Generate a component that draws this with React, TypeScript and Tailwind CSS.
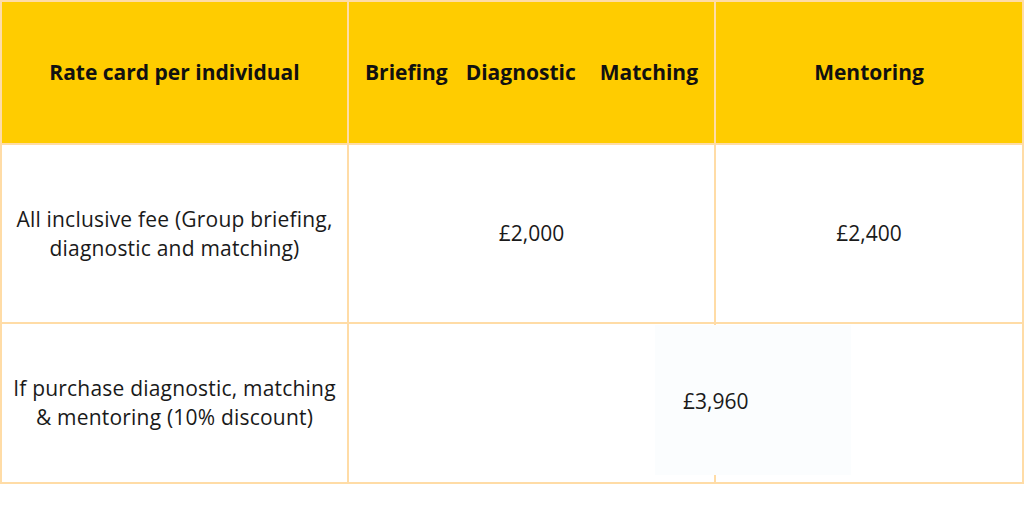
import React from "react";

export default function App() {
  const b = "border-[#FFDCA6]";
  return (
    <div className="w-[1024px] h-[512px] bg-white relative" style={{ fontFamily: '"Open Sans", sans-serif' }}>
      <div className={`grid grid-cols-[347px_367px_308px] grid-rows-[143px_179px_160px] border-l-2 border-t-2 ${b} w-[1024px] text-[#1a1a1a]`}>
        {/* header */}
        <div className={`bg-[#FFCC00] border-r-2 border-b-2 ${b} flex items-center justify-center font-bold text-[21px] text-[#111]`}>
          Rate card per individual
        </div>
        <div className={`bg-[#FFCC00] border-r-2 border-b-2 ${b} flex items-center justify-center font-bold text-[21px] text-[#111]`}>
          <span>Briefing</span>
          <span className="ml-[18px]">Diagnostic</span>
          <span className="ml-[24px]">Matching</span>
        </div>
        <div className={`bg-[#FFCC00] border-r-2 border-b-2 ${b} flex items-center justify-center font-bold text-[21px] text-[#111]`}>
          Mentoring
        </div>
        {/* row 2 */}
        <div className={`border-r-2 border-b-2 ${b} flex items-center justify-center text-center text-[21px] tracking-[0.2px] leading-[29px]`}>
          <div>
            All inclusive fee (Group briefing,
            <br />
            diagnostic and matching)
          </div>
        </div>
        <div className={`border-r-2 border-b-2 ${b} flex items-center justify-center text-[21px]`}>£2,000</div>
        <div className={`border-r-2 border-b-2 ${b} flex items-center justify-center text-[21px]`}>£2,400</div>
        {/* row 3 */}
        <div className={`border-r-2 border-b-2 ${b} flex items-center justify-center text-center text-[21px] tracking-[0.2px] leading-[29px]`}>
          <div>
            If purchase diagnostic, matching
            <br />
            &amp; mentoring (10% discount)
          </div>
        </div>
        <div className={`border-r-2 border-b-2 ${b}`}></div>
        <div className={`border-r-2 border-b-2 ${b}`}></div>
      </div>
      <div className="absolute left-[655px] top-[325px] w-[196px] h-[150px] bg-[#FBFDFE] flex items-center pt-[4px] text-[21px] text-[#1a1a1a]">
        <span className="ml-[28px]">£3,960</span>
      </div>
    </div>
  );
}
